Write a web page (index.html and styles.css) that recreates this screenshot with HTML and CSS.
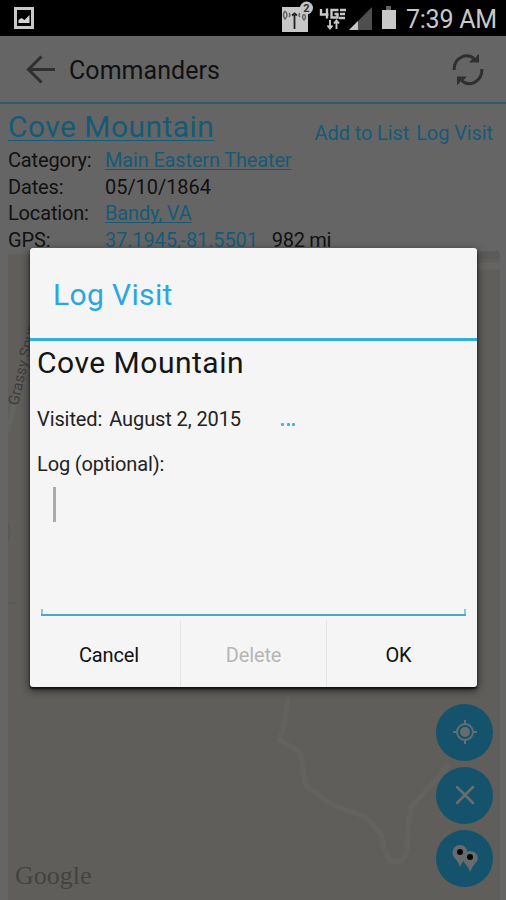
FILE: index.html
```html
<!DOCTYPE html>
<html lang="en">
<head>
<meta charset="utf-8">
<title>Log Visit</title>
<link rel="stylesheet" href="styles.css">
</head>
<body>
<div class="screen">
  <header class="status">
    <svg class="status-photo" width="20" height="22" viewBox="0 0 20 22"><path d="M1.500 1.500h17v19h-17z" fill="none" stroke="#c9c9c9" stroke-width="3"/><path d="M4.500 16v-3l3-2 3 2 5-5v8z" fill="#d4d4d4"/></svg>
    <svg class="status-icons" width="118" height="34" viewBox="281 0 118 34">
      <path d="M282 7h26v25h-26z" fill="#c8c8c8"/>
      <path d="M294.500 15v14M292 15.500l2.500-2 2.500 2" fill="none" stroke="#222" stroke-width="1.800"/>
      <path d="M285 11q-3 4 0 8q4-4 0-8M289 13q2 2 0 4M304 14q3 3 0 6q-3-3 0-6M300 13q-2 2 0 4" fill="none" stroke="#666" stroke-width="1.500"/>
      <circle cx="306.500" cy="8" r="6.500" fill="#c4c4c4"/>
      <text x="306.500" y="11.700" text-anchor="middle" class="badge-text">2</text>
      <path d="M321 9v5.500h7.500M327 8.500v10M338.500 10h-7v7.500h6v-3.500h-3M340 10h6M340 14h5M339 18h6" fill="none" stroke="#c8c8c8" stroke-width="2.400"/>
      <path d="M330 20v8M336.500 29v-8M327.500 25.500l2.500 3 2.500-3M334 23.500l2.500-3 2.500 3" fill="none" stroke="#c8c8c8" stroke-width="1.900"/>
      <path d="M349 30L372 7v23z" fill="#4e4e4e"/><path d="M349 30l9-9v9z" fill="#c6c6c6"/>
      <path d="M386 6h5v4h-5z" fill="#626262"/><path d="M382 10h14v19h-14z" fill="#c8c8c8"/>
    </svg>
    <span class="clock">7:39 AM</span>
  </header>
  <nav class="bar">
    <svg width="30" height="30" viewBox="26 54 30 30"><path d="M55 69.500H28.500M41.500 56.500l-13 13 13 13" fill="none" stroke="#2f2f2f" stroke-width="3"/></svg>
    <span class="bar-title">Commanders</span>
    <svg class="refresh" width="34" height="34" viewBox="451 52 34 34"><path d="M454 70C454 57 467 52 475 59.500M482 69C482 82 469 88 461 80" fill="none" stroke="#2f2f2f" stroke-width="3"/><path d="M479 54v8.500h-10l3.500-3.500 3-1 1.500-2.500zM457 85v-8.500h10l-3.500 3.500-3 1-1.500 2.500z" fill="#2f2f2f"/></svg>
  </nav>
  <section class="info">
    <div class="head"><a class="place">Cove Mountain</a><span class="actions"><a class="add">Add to List</a><a class="visit">Log Visit</a></span></div>
    <div class="row"><span class="label">Category:</span><a class="link theater">Main Eastern Theater</a></div>
    <div class="row"><span class="label">Dates:</span><span class="date">05/10/1864</span></div>
    <div class="row"><span class="label">Location:</span><a class="link">Bandy, VA</a></div>
    <div class="row"><span class="label">GPS:</span><a class="link gps">37.1945,-81.5501</a><span class="miles">982 mi</span></div>
  </section>
  <main class="map">
    <svg class="roads" width="492" height="647" viewBox="8 253 492 647">
      <path d="M8 254h492M478 269h22" fill="none" stroke="#646463" stroke-width="7"/>
      <path d="M482 258h14" stroke="#5b5a58" stroke-width="8" stroke-linecap="round"/>
      <path d="M30 335Q20 378 8 435" fill="none" stroke="#636361" stroke-width="5"/>
      <path d="M288 698l-3 25-5 20 20 12 6 34 25 18 36 14 14 16 3 14 6 13h12l5-10 1-26 3-18 22-24 16-18" fill="none" stroke="#626260" stroke-width="5" stroke-linejoin="round"/>
      <path d="M8 526q3 9 0 18M8 606h8" fill="none" stroke="#575650"/>
      <text class="street" transform="translate(18 409) rotate(-77)">Grassy Spur</text>
    </svg>
    <span class="google">Google</span>
    <div class="fabs">
      <span class="fab"><svg width="28" height="28" viewBox="-14 -14 28 28"><circle r="8" fill="none" stroke="#666d70" stroke-width="2"/><circle r="5" fill="#666d70"/><path d="M0-12v4M0 8v4M-12 0h4M8 0h4" stroke="#666d70" stroke-width="2"/></svg></span>
      <span class="fab"><svg width="28" height="28" viewBox="-14 -14 28 28"><path d="M-8-8L8 8M8-8L-8 8" stroke="#686d70" stroke-width="2.500" stroke-linecap="round"/></svg></span>
      <span class="fab"><svg width="28" height="28" viewBox="-14 -14 28 28"><path d="M-5 8Q-7 2-10.500-1C-15-7-11-14-5-14S5-7 .5-1Q-3 3-5 8z" fill="#676b6d"/><path d="M5 13Q3 7-.5 4C-5-2-1-8 5-8S16-2 10.500 4Q7 8 5 13z" fill="#676b6d"/><circle cx="-5" cy="-7" r="3" fill="#080808"/><circle cx="5" cy="-2" r="3" fill="#080808"/></svg></span>
    </div>
  </main>
</div>
<div class="dialog">
  <h1 class="dialog-title"><span>Log Visit</span></h1>
  <div class="content">
    <h2>Cove Mountain</h2>
    <div class="visited"><span class="vlabel">Visited:</span><span class="vdate">August 2, 2015</span><i></i><i></i><i></i></div>
    <div class="log-label">Log (optional):</div>
    <div class="field"><div class="caret"></div></div>
  </div>
  <div class="buttons"><span class="button cancel">Cancel</span><span class="button delete">Delete</span><span class="button ok">OK</span></div>
</div>
</body>
</html>
```
FILE: styles.css
```css
* { box-sizing: border-box; }
body { margin: 0; font-family: Roboto, sans-serif; background: #656565; color: #111; }
svg { display: block; flex: none; }
.screen { width: 506px; height: 900px; overflow: hidden; display: flex; flex-direction: column; }
.status { height: 36px; background: #000; display: flex; padding-left: 14px; flex: none; }
.status-photo { margin-top: 7px; }
.status-icons { margin-left: 247px; }
.badge-text { font-size: 11px; font-weight: 700; fill: #333; }
.clock { margin-left: 7px; line-height: 39px; font-size: 25px; letter-spacing: -.25px; color: #c8c8c8; white-space: nowrap; }
.bar { height: 68px; flex: none; display: flex; align-items: center; padding: 0 21px 0 26px; border-bottom: 2px solid #33586a; }
.bar-title { margin-left: 13px; font-size: 25px; letter-spacing: .05px; padding-top: 2px; }
.refresh { margin-left: auto; }
.info { height: 146px; flex: none; padding: 5px 13px 0 8px; font-size: 19px; }
.head { display: flex; height: 39px; justify-content: space-between; }
a { color: #155b78; white-space: nowrap; }
.place { font-size: 30px; line-height: 36px; letter-spacing: .45px; text-decoration: underline; text-decoration-thickness: 1px; text-underline-offset: 3px; }
.actions { display: flex; gap: 7px; line-height: 48px; font-size: 20px; letter-spacing: -.1px; }
.row { height: 26.700px; line-height: 25px; display: flex; white-space: nowrap; font-size: 20px; letter-spacing: -.16px; }
.label { width: 97px; flex: none; }
.date { letter-spacing: -.05px; }
.link { text-decoration: underline; text-decoration-thickness: 1px; text-underline-offset: 2px; }
.gps { letter-spacing: -.13px; }
.miles { margin-left: 14px; letter-spacing: -.3px; }
.map { position: relative; flex: 1; margin: 0 6px 0 8px; background: #5f5e5b; }
.street { font-size: 15px; fill: #3e3d3b; }
.google { position: absolute; left: 7px; bottom: 8px; font: 26px/32px "Liberation Serif", serif; color: #444341; }
.fabs { position: absolute; right: 7px; top: 453.500px; display: grid; gap: 6.300px; }
.fab { width: 57px; height: 57px; border-radius: 50%; background: #15536c; display: flex; align-items: center; justify-content: center; }
.dialog { position: absolute; left: 30px; top: 248px; width: 447px; height: 439px; background: #f5f5f5; border-radius: 3px; box-shadow: 0 2px 2px #111, 0 3px 9px #222; display: flex; flex-direction: column; }
.dialog-title { height: 93px; margin: 0; padding-left: 23px; border-bottom: 3px solid #32afe0; color: #29a8df; font-size: 30px; font-weight: 400; letter-spacing: .35px; line-height: 93px; flex: none; }
.content { height: 279px; padding: 0 11px 0 7px; color: #222; flex: none; }
h2 { margin: 0; font-size: 30px; line-height: 44px; font-weight: 400; letter-spacing: .5px; color: #151515; }
.visited { display: flex; height: 45px; margin-top: 12px; line-height: 45px; font-size: 20px; align-items: center; letter-spacing: -.1px; }
.vdate { margin-left: 7px; margin-right: 40px; white-space: nowrap; }
.visited i { width: 3px; height: 3px; margin-right: 2.500px; margin-top: 9px; background: #39b4df; border-radius: 1px; }
.log-label { line-height: 45px; font-size: 20px; letter-spacing: -.13px; }
.field { height: 129px; margin-left: 4px; border-bottom: 2px solid #4da6ca; padding: 0 0 0 12px; background: linear-gradient(#8fc6de,#8fc6de) left bottom/2px 5px no-repeat, linear-gradient(#8fc6de,#8fc6de) right bottom/2px 5px no-repeat; }
.caret { width: 3px; height: 35px; background: #aaa; }
.buttons { display: grid; grid-template-columns: 150px 146px 151px; height: 67px; font-size: 20px; line-height: 70px; letter-spacing: -.13px; text-align: center; color: #111; }
.button { height: 67px; }
.button + .button { border-left: 1px solid #e5e5e5; }
.delete { color: #b5b5b5; }
.button.cancel { padding-left: 8px; }
.button.ok { padding-right: 7px; }
```
